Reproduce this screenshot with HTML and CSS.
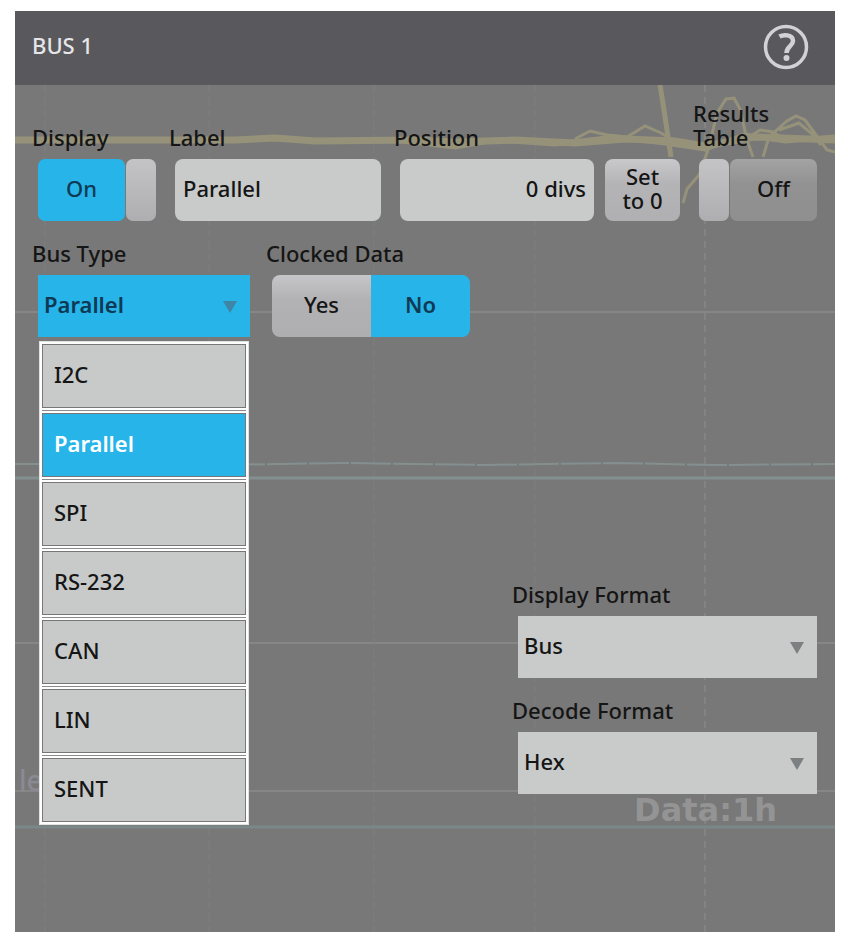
FILE: index.html
```
<!DOCTYPE html>
<html lang="en">
<head>
    <meta charset="UTF-8">
    <meta name="viewport" content="width=device-width, initial-scale=1.0">
    <title>Bus 1</title>
    <link rel="stylesheet" href="styles.css">
</head>
<body>
    <main class="panel">
        <header class="panel-header">
            <h1>BUS 1</h1>
            <button type="button" class="help" aria-label="Help">
                <svg width="46" height="46" viewBox="0 0 46 46" fill="none" stroke="#d2d2d6">
                    <circle cx="23" cy="23" r="20.500" stroke-width="3.500"/>
                    <path d="M16.500 12.500C20 10.500 30 10 30 17C30 22 23.500 22.500 23.500 29" stroke-width="4.500"/>
                    <circle cx="23.500" cy="34" r="3" fill="#d2d2d6" stroke="none"/>
                </svg>
            </button>
        </header>

        <div class="panel-body">
            <!-- dimmed oscilloscope screen behind the controls -->
            <div class="scope" aria-hidden="true">
                <svg viewBox="0 0 820 847" preserveAspectRatio="none" fill="none">
                    <g stroke="#868686" stroke-width="2">
                        <path d="M0 227H820M0 558H820M0 706H820"/>
                    </g>
                    <g stroke="#7f7f7f" stroke-width="1">
                        <path d="M30 0V847M194 0V847M359 0V847M520 0V847" stroke-dasharray="8 4"/>
                    </g>
                    <path d="M690 0V847" stroke="#8e8e8e" stroke-width="1" stroke-dasharray="7 5"/>
                    <g stroke="#84908f">
                        <path d="M0 379H70L90 378L200 380L330 378L470 380L600 378L700 380L820 379" stroke-width="2" stroke-dasharray="40 2"/>
                        <path d="M0 393H820" stroke-width="3"/>
                        <path d="M0 742H820" stroke="#7c8787" stroke-width="3"/>
                    </g>
                    <g stroke="#96927a">
                        <path d="M0 55H220L260 53L300 56L400 55L440 57L500 55L560 58L610 54L660 56L690 61L740 52L820 55" stroke-width="7"/>
                        <path d="M380 55L440 62L480 55L540 59L600 52L650 58L690 64L730 50L770 56L820 52" stroke-width="5"/>
                        <path d="M560 54L575 46L592 50L612 52L630 41L646 48L658 55" stroke-width="3"/>
                        <path d="M645 0L649 25L652 45L656 72" stroke-width="5"/>
                        <path d="M668 118L672 104L684 90L694 62L702 28L711 14L719 13L725 24L732 55L738 72" stroke-width="3"/>
                        <path d="M748 72L754 52L772 36L781 31L790 35L801 50L812 65L820 67M764 45L784 38L796 48L806 60" stroke-width="3"/>
                        <path d="M733 53L745 45L758 47L768 54" stroke-width="3"/>
                    </g>
                </svg>
                <span class="trace-name">le</span>
                <span class="trace-data">Data:1h</span>
            </div>

            <div class="row row-main">
                <div class="field">
                    <label for="display">Display</label>
                    <button type="button" class="switch switch-on" id="display" role="switch" aria-checked="true">
                        <span class="switch-text">On</span>
                        <span class="switch-knob"></span>
                    </button>
                </div>
                <div class="field">
                    <label for="busLabel">Label</label>
                    <input type="text" class="box" id="busLabel" value="Parallel">
                </div>
                <div class="field">
                    <label for="position">Position</label>
                    <div class="position">
                        <input type="text" class="box box-number" id="position" value="0 divs">
                        <button type="button" class="set-zero">Set<br>to 0</button>
                    </div>
                </div>
                <div class="field">
                    <label for="results">Results<br>Table</label>
                    <button type="button" class="switch" id="results" role="switch" aria-checked="false">
                        <span class="switch-knob"></span>
                        <span class="switch-text">Off</span>
                    </button>
                </div>
            </div>

            <div class="row row-type">
                <div class="field">
                    <label for="busType">Bus Type</label>
                    <div class="dropdown dropdown-open">
                        <select id="busType">
                            <option>I2C</option>
                            <option selected>Parallel</option>
                            <option>SPI</option>
                            <option>RS-232</option>
                            <option>CAN</option>
                            <option>LIN</option>
                            <option>SENT</option>
                        </select>
                        <ul class="menu">
                            <li><button type="button">I2C</button></li>
                            <li><button type="button" class="selected">Parallel</button></li>
                            <li><button type="button">SPI</button></li>
                            <li><button type="button">RS-232</button></li>
                            <li><button type="button">CAN</button></li>
                            <li><button type="button">LIN</button></li>
                            <li><button type="button">SENT</button></li>
                        </ul>
                    </div>
                </div>
                <div class="field" role="group" aria-labelledby="clockedLabel">
                    <span id="clockedLabel">Clocked Data</span>
                    <div class="choice">
                        <button type="button">Yes</button>
                        <button type="button" class="selected">No</button>
                    </div>
                </div>
            </div>

            <div class="formats">
                <div class="field">
                    <label for="displayFormat">Display Format</label>
                    <div class="dropdown">
                        <select id="displayFormat">
                            <option>Bus</option>
                            <option>Bus and Waveforms</option>
                        </select>
                    </div>
                </div>
                <div class="field">
                    <label for="decodeFormat">Decode Format</label>
                    <div class="dropdown">
                        <select id="decodeFormat">
                            <option>Hex</option>
                            <option>Binary</option>
                        </select>
                    </div>
                </div>
            </div>
        </div>
    </main>
</body>
</html>
```
FILE: styles.css
```
* {
    box-sizing: border-box;
}
body {
    margin: 0;
    padding: 11px 13px 11px 15px;
    background-color: #fff;
    color: #151515;
    font-family: "Noto Sans", "Open Sans", sans-serif;
    font-size: 22px;
    font-weight: 500;
    line-height: 24px;
}
button, input, select {
    font: inherit;
    color: inherit;
    margin: 0;
    padding: 0;
    border: none;
}
button {
    cursor: pointer;
}

.panel {
    display: flex;
    flex-direction: column;
    min-height: calc(100vh - 22px);
    background-color: #787878;
}
.panel-header {
    display: flex;
    align-items: center;
    justify-content: space-between;
    height: 74px;
    padding: 0 26px 2px 17px;
    background-color: #59585c;
}
.panel-header h1 {
    margin: 0;
    padding-bottom: 4px;
    color: #e6e6e8;
    font-size: 22px;
    font-weight: 500;
}
.help {
    display: flex;
    background: none;
}
.panel-body {
    position: relative;
    display: flex;
    flex: 1;
    flex-direction: column;
    padding: 16px 18px 138px 17px;
}

/* scope screen */
.scope {
    position: absolute;
    inset: 0;
    overflow: hidden;
}
.scope svg {
    display: block;
    width: 100%;
    height: 100%;
}
.trace-name, .trace-data {
    position: absolute;
    line-height: 32px;
}
.trace-name {
    left: 4px;
    bottom: 136px;
    color: #8b8a94;
    font-size: 28px;
}
.trace-data {
    right: 58px;
    bottom: 106px;
    color: #949494;
    font-family: "DejaVu Sans", sans-serif;
    font-size: 32px;
    font-weight: bold;
}

/* fields */
.row {
    position: relative;
    display: grid;
    column-gap: 13px;
    align-items: end;
}
.row-main {
    grid-template-columns: 124px 212fr 286fr 124px;
}
.row-type {
    grid-template-columns: 218px 204px;
    column-gap: 16px;
    margin-top: 20px;
    z-index: 1;
}
.field {
    display: flex;
    flex-direction: column;
    gap: 10px;
    min-width: 0;
}
.field > :last-child {
    margin-left: 6px;
}
.box {
    min-width: 0;
    height: 62px;
    padding: 0 8px 4px;
    border-radius: 8px;
    background-color: #c8cbca;
}
.box-number {
    flex: 1;
    text-align: right;
}
.position {
    display: flex;
    gap: 11px;
}
.set-zero {
    width: 75px;
    height: 62px;
    padding-bottom: 4px;
    border-radius: 8px;
    background: linear-gradient(#c9c9cb, #b4b4b6 40%, #b0b0b2);
}

.switch {
    display: flex;
    gap: 1px;
    height: 62px;
    background: none;
}
.switch-text, .switch-knob {
    display: flex;
    align-items: center;
    justify-content: center;
    height: 62px;
    padding-bottom: 4px;
    border-radius: 7px;
}
.switch-text {
    flex: 1;
    background: linear-gradient(#a3a3a3, #929292 40%, #8f8f8f);
}
.switch-knob {
    width: 30px;
    background: linear-gradient(#c4c4c6, #aeaeb0);
}
.switch-on .switch-text {
    background: #27b5e9;
    color: #0e3a55;
}

.choice {
    display: flex;
    overflow: hidden;
    border-radius: 8px;
}
.choice button {
    flex: 1;
    height: 62px;
    padding-bottom: 4px;
    background: linear-gradient(#c6c6c8, #b2b2b4 40%, #aeaeb0);
}
.choice .selected {
    background: #27b5e9;
    color: #0e3a55;
    font-weight: 600;
}

.dropdown {
    position: relative;
}
.dropdown::after {
    content: "";
    position: absolute;
    top: 26px;
    right: 13px;
    width: 14px;
    height: 12px;
    background-color: #7c8080;
    clip-path: polygon(0 0, 100% 0, 50% 100%);
    pointer-events: none;
}
.dropdown select {
    display: block;
    width: 100%;
    height: 62px;
    padding: 0 6px 4px;
    appearance: none;
    border-radius: 0;
    background-color: #c8cbca;
}
.dropdown-open::after {
    background-color: #3f86a6;
}
.dropdown-open select {
    background-color: #27b5e9;
    color: #0e3a55;
    font-weight: 600;
}
.menu {
    position: absolute;
    top: 66px;
    left: 1px;
    right: 1px;
    margin: 0;
    padding: 2px;
    border: 1px solid #e2e2e2;
    background-color: #fff;
    list-style: none;
}
.menu li + li {
    margin-top: 2px;
    padding-top: 2px;
    border-top: 1px solid #8a8a8a;
}
.menu button {
    display: block;
    width: 100%;
    height: 64px;
    padding: 0 11px 5px;
    border: 1px solid #777;
    background-color: #c8cac9;
    text-align: left;
}
.menu .selected {
    background-color: #27b5e9;
    color: #fff;
    font-weight: 600;
}

.formats {
    position: relative;
    display: flex;
    flex-direction: column;
    gap: 20px;
    width: 305px;
    margin-top: auto;
    margin-left: auto;
}
```
